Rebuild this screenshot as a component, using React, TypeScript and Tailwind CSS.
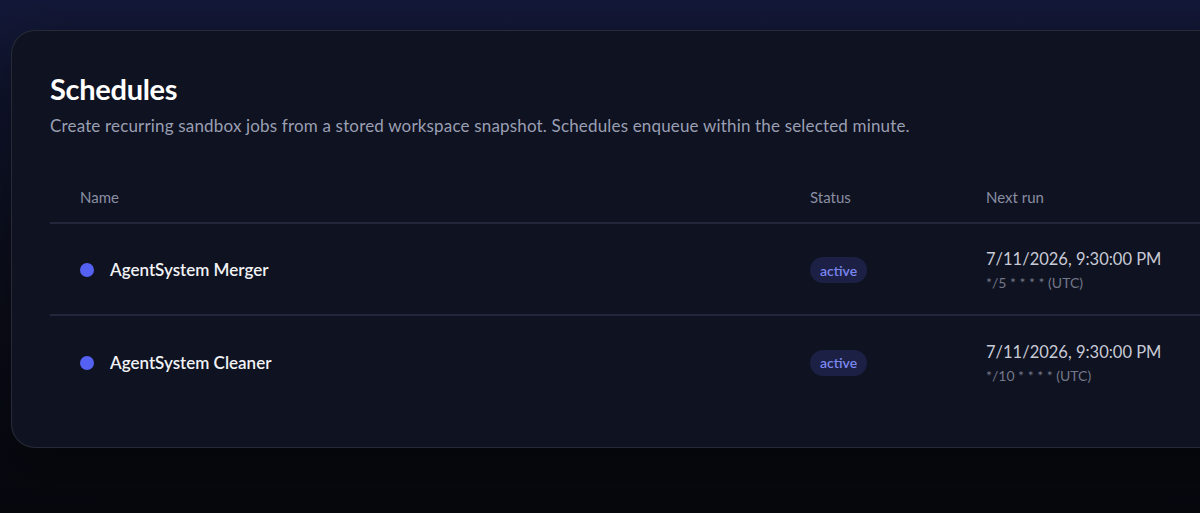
import React from "react";

const schedules = [
  { name: "AgentSystem Merger", status: "active", next: "7/11/2026, 9:30:00 PM", cron: "*/5 * * * * (UTC)" },
  { name: "AgentSystem Cleaner", status: "active", next: "7/11/2026, 9:30:00 PM", cron: "*/10 * * * * (UTC)" },
];

export default function App() {
  return (
    <div
      className="h-[513px] w-[1200px] overflow-hidden bg-gradient-to-b from-[#131838] via-[#0c0f1d] to-[#07080e] pt-[30px] pl-[11px]"
      style={{ fontFamily: "Lato, 'Noto Sans', sans-serif" }}
    >
      {/* Card */}
      <div className="w-[1240px] rounded-[24px] border border-white/10 bg-[#0f1220] px-[38px] pt-[40px] pb-[40px] shadow-[0_20px_60px_rgba(0,0,0,0.45)]">
        <h1 className="text-[29px] font-bold leading-[36px] tracking-[-0.3px] text-white">Schedules</h1>
        <p className="mt-[7px] text-[17px] leading-[24px] tracking-[0.17px] text-[#9a9fb3]">
          Create recurring sandbox jobs from a stored workspace snapshot. Schedules enqueue within the selected minute.
        </p>

        <table className="mt-[37px] w-full border-collapse text-left">
          <thead>
            <tr className="border-b-2 border-[#22263a]">
              <th className="w-[730px] px-[30px] pb-[13px] pt-[11px] text-[15px] font-normal text-[#8a8ea3]">Name</th>
              <th className="w-[176px] px-[30px] pb-[13px] pt-[11px] text-[15px] font-normal text-[#8a8ea3]">Status</th>
              <th className="px-[30px] pb-[13px] pt-[11px] text-[15px] font-normal text-[#8a8ea3]">Next run</th>
            </tr>
          </thead>
          <tbody>
            {schedules.map((s, i) => (
              <tr key={s.name} className={i === 0 ? "h-[92px] border-b-2 border-[#22263a]" : "h-[92px]"}>
                <td className="px-[30px] pt-[3px]">
                  <div className="flex items-center gap-[16px]">
                    <span className="h-[14px] w-[14px] rounded-full bg-[#5561f2]" />
                    <span className="text-[17px] font-semibold text-[#f1f2f6]">{s.name}</span>
                  </div>
                </td>
                <td className="px-[30px] pt-[3px]">
                  <span className="inline-flex h-[26px] items-center rounded-full bg-[#1b2044] px-[10px] text-[14px] font-semibold text-[#7c86f0]">
                    {s.status}
                  </span>
                </td>
                <td className="px-[30px] pt-[3px]">
                  <div className="text-[16.5px] leading-[22px] text-[#c7cad6]">{s.next}</div>
                  <div className="mt-[4px] text-[14px] leading-[18px] text-[#737889]">{s.cron}</div>
                </td>
              </tr>
            ))}
          </tbody>
        </table>
      </div>
    </div>
  );
}
